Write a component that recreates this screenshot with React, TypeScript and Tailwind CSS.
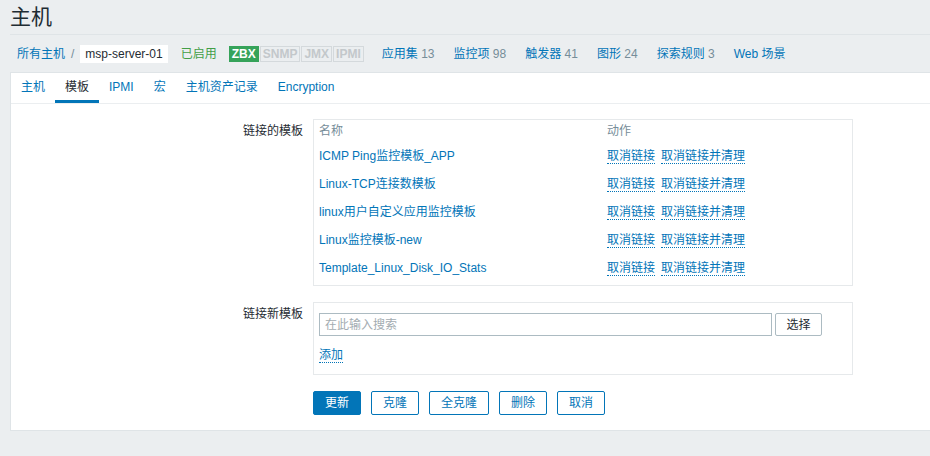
import React from 'react';

const font = "font-['Liberation_Sans','Noto_Sans_CJK_SC',sans-serif]";

const counters = [
  { name: '应用集', count: '13' },
  { name: '监控项', count: '98' },
  { name: '触发器', count: '41' },
  { name: '图形', count: '24' },
  { name: '探索规则', count: '3' },
  { name: 'Web 场景', count: '' },
];

const tabs = ['主机', '模板', 'IPMI', '宏', '主机资产记录', 'Encryption'];

const templates = [
  'ICMP Ping监控模板_APP',
  'Linux-TCP连接数模板',
  'linux用户自定义应用监控模板',
  'Linux监控模板-new',
  'Template_Linux_Disk_IO_Stats',
];

// 虚线下划线的链接
function DottedLink({ children }: { children: React.ReactNode }) {
  return (
    <span className="text-[#0275b8] leading-[14px] border-b border-dotted border-[#0275b8] cursor-pointer">
      {children}
    </span>
  );
}

export default function App() {
  return (
    <div className={`${font} min-h-[456px] bg-[#ebeef0] pl-[10px] text-[12px] text-[#1f2c33]`}>
      {/* 标题 */}
      <div className="h-[35px] flex items-center border-b border-[#dfe4e7]">
        <h1 className="text-[21px] leading-[24px] text-[#1f2c33]">主机</h1>
      </div>

      {/* 主机导航 */}
      <div className="h-[37px] flex items-center pl-[7px]">
        <a className="text-[#0275b8]">所有主机</a>
        <span className="mx-[6px] text-[#768d99]">/</span>
        <span className="h-[18px] px-[5px] bg-white flex items-center text-[#1f2c33]">msp-server-01</span>
        <span className="ml-[13px] text-[#429e47]">已启用</span>
        <div className="ml-[12px] flex gap-[1px] font-bold">
          <span className="h-[16px] px-[2px] flex items-center bg-[#36a35a] border border-[#36a35a] text-white">ZBX</span>
          <span className="h-[16px] px-[2px] flex items-center border border-[#d4d9dc] text-[#c3c8cb]">SNMP</span>
          <span className="h-[16px] px-[2px] flex items-center border border-[#d4d9dc] text-[#c3c8cb]">JMX</span>
          <span className="h-[16px] px-[2px] flex items-center border border-[#d4d9dc] text-[#c3c8cb]">IPMI</span>
        </div>
        <div className="ml-[18px] flex gap-[19px]">
          {counters.map((c) => (
            <span key={c.name}>
              <a className="text-[#0275b8]">{c.name}</a>
              {c.count && <span className="text-[#768d99]"> {c.count}</span>}
            </span>
          ))}
        </div>
      </div>

      {/* 内容面板 */}
      <div className="bg-white border-l border-y border-[#dfe4e7]">
        <div className="h-[31px] flex border-b border-[#ebeef0]">
          {tabs.map((t) => (
            <div
              key={t}
              className={
                t === '模板'
                  ? 'px-[10px] pt-[1px] flex items-center border-b-[3px] border-[#0275b8] text-[#1f2c33]'
                  : 'px-[10px] pt-[1px] flex items-center border-b-[3px] border-transparent text-[#0275b8]'
              }
            >
              {t}
            </div>
          ))}
        </div>

        <div className="pt-[15px] pb-[15px]">
          {/* 链接的模板 */}
          <div className="flex items-start">
            <div className="w-[292px] pt-[5px] leading-[14px] text-right">链接的模板</div>
            <div className="ml-[10px] w-[540px] border border-[#e6e9eb] px-[5px] pb-[3px]">
              <div className="h-[22px] flex items-center text-[#768d99]">
                <div className="w-[288px]">名称</div>
                <div>动作</div>
              </div>
              {templates.map((t) => (
                <div key={t} className="h-[28px] flex items-center">
                  <div className="w-[288px] text-[#0275b8]">{t}</div>
                  <div className="flex gap-[6px]">
                    <DottedLink>取消链接</DottedLink>
                    <DottedLink>取消链接并清理</DottedLink>
                  </div>
                </div>
              ))}
            </div>
          </div>

          {/* 链接新模板 */}
          <div className="mt-[16px] flex items-start">
            <div className="w-[292px] pt-[5px] leading-[14px] text-right">链接新模板</div>
            <div className="ml-[10px] w-[540px] border border-[#e6e9eb] px-[5px] pt-[10px] pb-[11px]">
              <div className="flex">
                <div className="w-[453px] h-[23px] border border-[#acbbc2] px-[5px] flex items-center text-[#a3acb1]">
                  在此输入搜索
                </div>
                <button className="ml-[3px] w-[47px] h-[23px] border border-[#acbbc2] rounded-[2px] bg-white text-[#1f2c33]">
                  选择
                </button>
              </div>
              <div className="mt-[12px] flex">
                <DottedLink>添加</DottedLink>
              </div>
            </div>
          </div>

          {/* 按钮 */}
          <div className="mt-[16px] ml-[302px] flex gap-[10px]">
            <button className="h-[24px] px-[11px] rounded-[2px] bg-[#0275b8] border border-[#0275b8] text-white">更新</button>
            <button className="h-[24px] px-[11px] rounded-[2px] bg-white border border-[#0275b8] text-[#0275b8]">克隆</button>
            <button className="h-[24px] px-[11px] rounded-[2px] bg-white border border-[#0275b8] text-[#0275b8]">全克隆</button>
            <button className="h-[24px] px-[11px] rounded-[2px] bg-white border border-[#0275b8] text-[#0275b8]">删除</button>
            <button className="h-[24px] px-[11px] rounded-[2px] bg-white border border-[#0275b8] text-[#0275b8]">取消</button>
          </div>
        </div>
      </div>
    </div>
  );
}
